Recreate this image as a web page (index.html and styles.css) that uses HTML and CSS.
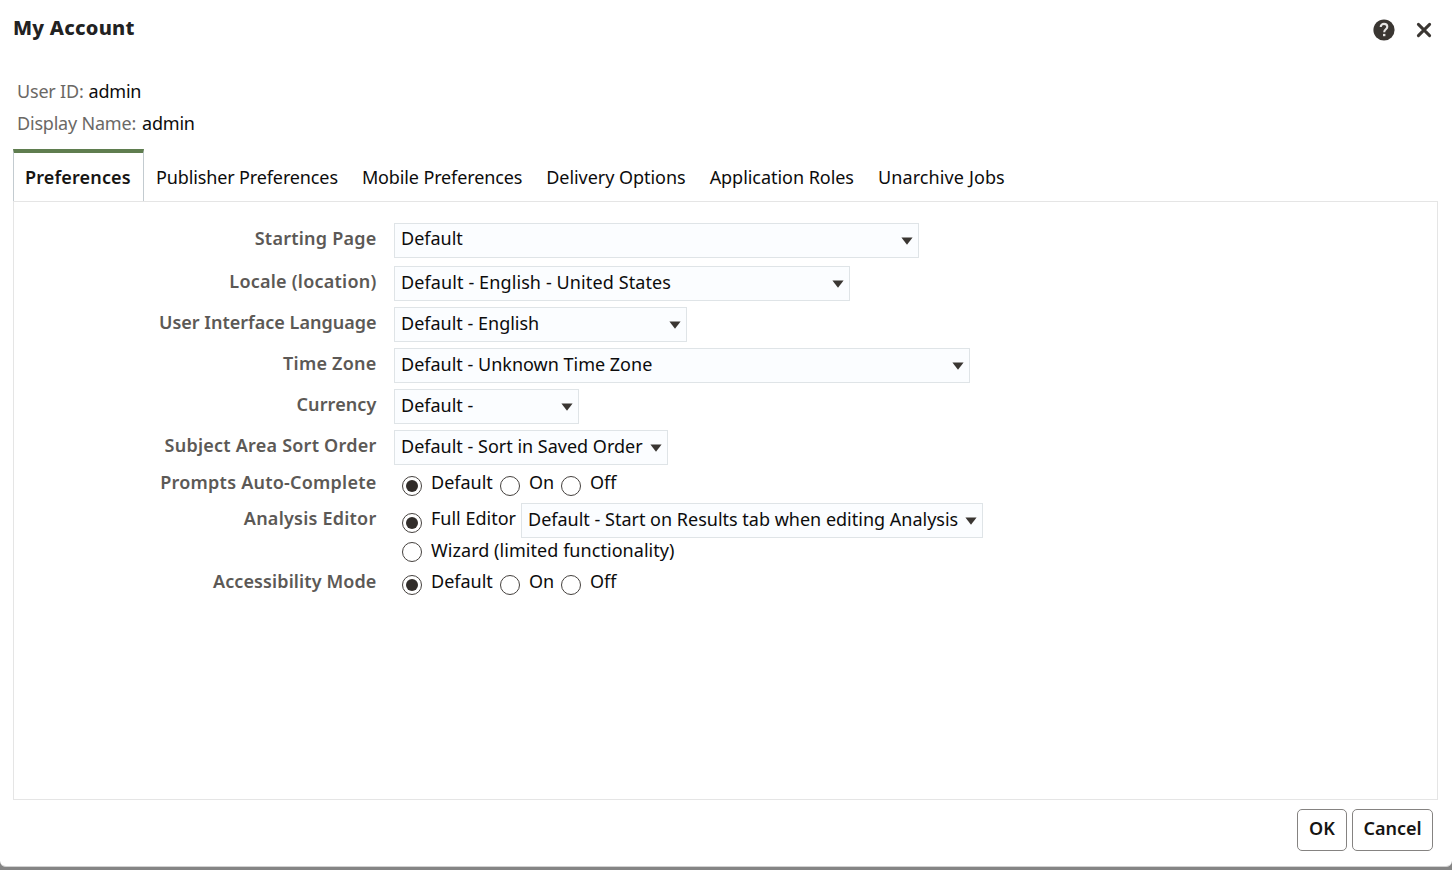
FILE: index.html
```html
<!DOCTYPE html>
<html lang="en">
<head>
<meta charset="utf-8">
<title>My Account</title>
<link rel="stylesheet" href="styles.css">
</head>
<body>
<div class="dialog">
  <header class="header">
    <h1 class="title">My Account</h1>
    <div class="tools">
      <svg class="help" width="22" height="22" viewBox="0 0 22 22"><circle cx="11" cy="11" r="10.6" fill="#3a3632"/><path d="M7.7 8C7.7 6 9.1 4.9 11 4.9s3.3 1.1 3.3 2.9c0 2.5-3.1 2.5-3.1 5.4" fill="none" stroke="#e6e5e4" stroke-width="2.1"/><rect x="10" y="14.9" width="2.4" height="2.3" fill="#e6e5e4"/></svg>
      <svg class="close" width="16" height="16" viewBox="0 0 16 16"><path d="M2.4 2.4l11.2 11.2M13.6 2.4L2.4 13.6" stroke="#3a3632" stroke-width="3" stroke-linecap="round"/></svg>
    </div>
  </header>
  <div class="identity">
    <div><span class="muted">User ID:</span><span>admin</span></div>
    <div><span class="muted name">Display Name:</span><span>admin</span></div>
  </div>
  <nav class="tabs">
    <span class="tab active">Preferences</span>
    <span class="tab tight">Publisher Preferences</span>
    <span class="tab tight">Mobile Preferences</span>
    <span class="tab snug">Delivery Options</span>
    <span class="tab snug">Application Roles</span>
    <span class="tab ls-1">Unarchive Jobs</span>
  </nav>
  <main class="panel">
    <div class="row first"><span class="label ls-2">Starting Page</span><div class="select w-page"><span>Default</span><svg class="arrow" width="12" height="8" viewBox="0 0 12 8"><path d="M.4.5h11.2L6 7.8z"/></svg></div></div>
    <div class="row"><span class="label ls-2">Locale (location)</span><div class="select w-locale"><span class="ls-1">Default - English - United States</span><svg class="arrow" width="12" height="8" viewBox="0 0 12 8"><path d="M.4.5h11.2L6 7.8z"/></svg></div></div>
    <div class="row"><span class="label">User Interface Language</span><div class="select w-lang"><span>Default - English</span><svg class="arrow" width="12" height="8" viewBox="0 0 12 8"><path d="M.4.5h11.2L6 7.8z"/></svg></div></div>
    <div class="row"><span class="label ls-2">Time Zone</span><div class="select w-zone"><span>Default - Unknown Time Zone</span><svg class="arrow" width="12" height="8" viewBox="0 0 12 8"><path d="M.4.5h11.2L6 7.8z"/></svg></div></div>
    <div class="row"><span class="label ls-1">Currency</span><div class="select w-currency"><span>Default -</span><svg class="arrow" width="12" height="8" viewBox="0 0 12 8"><path d="M.4.5h11.2L6 7.8z"/></svg></div></div>
    <div class="row sort"><span class="label ls-2">Subject Area Sort Order</span><div class="select w-sort"><span>Default - Sort in Saved Order</span><svg class="arrow" width="12" height="8" viewBox="0 0 12 8"><path d="M.4.5h11.2L6 7.8z"/></svg></div></div>
    <div class="row prompts"><span class="label ls-2">Prompts Auto-Complete</span>
      <div class="options"><span class="option opt-default"><i class="radio on"></i>Default</span><span class="option opt-on"><i class="radio"></i>On</span><span class="option"><i class="radio"></i>Off</span></div>
    </div>
    <div class="row editor"><span class="label ls-2">Analysis Editor</span>
      <div class="options"><span class="option opt-full"><i class="radio on"></i>Full Editor</span><div class="select w-start"><span>Default - Start on Results tab when editing Analysis</span><svg class="arrow" width="12" height="8" viewBox="0 0 12 8"><path d="M.4.5h11.2L6 7.8z"/></svg></div></div>
    </div>
    <div class="row wizard"><span class="label"></span>
      <div class="options"><span class="option"><i class="radio"></i>Wizard (limited functionality)</span></div>
    </div>
    <div class="row access"><span class="label ls-1">Accessibility Mode</span>
      <div class="options"><span class="option opt-default"><i class="radio on"></i>Default</span><span class="option opt-on"><i class="radio"></i>On</span><span class="option"><i class="radio"></i>Off</span></div>
    </div>
  </main>
  <footer class="footer"><button class="btn ok">OK</button><button class="btn cancel">Cancel</button></footer>
</div>
</body>
</html>
```

FILE: styles.css
```css
* { box-sizing: border-box; }
body {
  margin: 0;
  height: 870px;
  overflow: hidden;
  background: #858585;
  font: 400 18px/26px "Noto Sans", sans-serif;
  color: #0c0c0c;
}
.ls-1 { letter-spacing: .11px; }
.ls-2 { letter-spacing: .23px; }
.tight { letter-spacing: -.13px; }
.snug { letter-spacing: -.04px; }
.dialog {
  height: 867px;
  padding: 0 14px 0 13px;
  background: #fff;
  border-bottom: 1px solid #d2d2d2;
  border-radius: 0 0 6px 6px;
  white-space: nowrap;
}
.header { display: flex; justify-content: space-between; height: 78px; }
.title {
  margin: 14px 0 0;
  font-size: 20px;
  line-height: 28px;
  font-weight: 800;
  letter-spacing: .25px;
  color: #222;
}
.tools { display: flex; gap: 21px; padding: 19px 6px 0 0; }
.close { margin-top: 3px; }
.identity { padding-left: 4px; height: 71px; letter-spacing: -.2px; }
.identity div { display: flex; height: 32px; }
.muted { width: 71.5px; color: #6b6865; }
.name { width: 125px; }
.tabs { display: flex; height: 52px; position: relative; z-index: 1; }
.tab { padding: 15px 12px 0; }
.active {
  width: 131px;
  padding: 11px 0 0 11px;
  border: solid #c3cbd0;
  border-width: 4px 1px 0;
  border-top-color: #5f7d4f;
  font-weight: 650;
  letter-spacing: .15px;
  color: #161513;
}
.panel { height: 599px; border: 1px solid #e5e5e5; padding-top: 21px; }
.row { display: flex; height: 41px; }
.label {
  width: 362.5px;
  margin-right: 17.5px;
  padding-top: 2px;
  text-align: right;
  font-weight: 600;
  color: #5c5956;
}
.first { height: 43px; }
.sort { height: 39px; }
.prompts { height: 34px; }
.editor { height: 35px; }
.wizard { height: 30px; }
.prompts .label, .access .label { padding-top: 0; }
.select {
  display: flex;
  justify-content: space-between;
  height: 35px;
  padding: 0 5px 0 6px;
  border: 1px solid #dfe4e7;
  background: #fbfdff;
  line-height: 30px;
}
.first .select { line-height: 29px; }
.arrow { margin-top: 13px; fill: #3a3632; }
.w-page { width: 525px; }
.w-locale { width: 456px; }
.w-lang { width: 293px; }
.w-zone { width: 576px; }
.w-currency { width: 185px; }
.w-sort { width: 274px; }
.w-start { width: 462px; }
.w-start .arrow { margin-left: -8px; }
.options { display: flex; padding-left: 8px; }
.option { display: flex; gap: 9px; }
.opt-default { width: 98px; }
.opt-on { width: 61px; }
.opt-full { width: 119px; padding-top: 2px; }
.radio {
  flex: none;
  display: grid;
  place-items: center;
  width: 20px;
  height: 20px;
  margin-top: 7px;
  border: 1px solid #45413e;
  border-radius: 50%;
}
.on::after {
  content: "";
  width: 12px;
  height: 12px;
  border-radius: 50%;
  background: #312d2a;
}
.opt-full .radio { margin-top: 8px; }
.wizard .option { line-height: 24px; letter-spacing: .05px; }
.wizard .radio { margin-top: 4px; }
.footer { display: flex; justify-content: flex-end; gap: 5px; padding: 9px 5px 0 0; }
.btn {
  height: 42px;
  padding: 0 0 4px;
  border: 1px solid #858381;
  border-radius: 5px;
  background: #fff;
  font: 600 18px/26px "Noto Sans", sans-serif;
  color: #161513;
}
.ok { width: 50px; }
.cancel { width: 81px; }
```
